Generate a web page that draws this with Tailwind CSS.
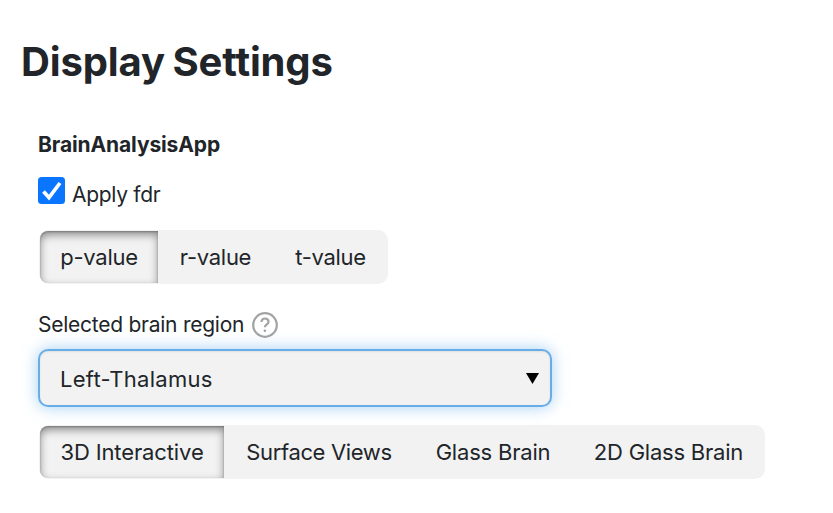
<!DOCTYPE html>
<html lang="en"><head><meta charset="utf-8"><title>Display Settings</title>
<script src="https://cdn.jsdelivr.net/npm/@tailwindcss/browser@4"></script></head>
<body class="bg-white font-['Inter',sans-serif] text-[#212529]">
<main class="flex w-[833px] h-[513px] flex-col overflow-hidden pt-[36px]">
<h1 class="pl-[21px] h-[52px] text-[40px] leading-[52px] font-bold tracking-[-0.14px] [word-spacing:-1.6px] whitespace-nowrap">Display Settings</h1>
<section class="flex flex-col items-start pl-[38px] pt-[43px] whitespace-nowrap">
<h2 class="h-[28px] text-[21px] leading-[28px] font-bold tracking-[-0.12px]">BrainAnalysisApp</h2>
<label class="mt-[18px] flex h-[28px] items-start gap-[7px] text-[21px] leading-[36px] tracking-[-0.3px]">
<svg class="h-[27px] w-[27px]" viewBox="0 0 27 27"><rect width="27" height="27" rx="3.500" fill="#0a76ff"/><path d="M5.500 14.500l5.500 6L22 6" fill="none" stroke="white" stroke-width="3.700"/></svg>Apply fdr</label>
<div class="mt-[25px] ml-px flex h-[54px] rounded-[10px] bg-[#f2f2f2] pt-px pl-px text-[22px] leading-[53px] tracking-[-0.28px]">
<div class="h-[52px] w-[118px] rounded-l-[8px] text-center shadow-[inset_0_4px_9px_rgba(0,0,0,.42),inset_0_1px_2px_rgba(0,0,0,.25)]">p-value</div><div class="w-[115px] text-center">r-value</div><div class="w-[115px] text-center">t-value</div></div>
<div class="mt-[27px] flex h-[28px] items-center gap-2 text-[21px] leading-[28px] tracking-[-0.25px]">Selected brain region<svg class="h-[27px] w-[27px]" viewBox="0 0 27 27" fill="none" stroke="#a3a3a3" stroke-width="2.200"><circle cx="13" cy="13" r="11.800"/><path d="M9.500 10c0-4.800 7-4.500 7 0 0 2.500-3.600 2.500-3.600 5.300"/><circle cx="12.900" cy="18.800" r="1.300" fill="#a3a3a3" stroke="none"/></svg></div>
<div class="mt-[10px] flex h-[58px] w-[514px] items-center justify-between rounded-[10px] border-2 border-[#67aee8] bg-[#f2f2f2] pl-[20px] pr-[11px] text-[22px] tracking-[0.28px] shadow-[inset_0_1px_2px_rgba(0,0,0,.08),0_0_16px_rgba(102,175,233,.6)]"><span class="pt-[2px]">Left-Thalamus</span><svg class="h-[11px] w-[13px]" viewBox="0 0 13 11"><path d="M0 0h13L6.500 11z" fill="black"/></svg></div>
<div class="relative mt-[18px] ml-px flex h-[54px] rounded-[10px] bg-[#f2f2f2] pt-px pl-px text-[22px] leading-[53px] tracking-[-0.12px]">
<div class="h-[52px] w-[184px] rounded-l-[8px] text-center shadow-[inset_0_4px_9px_rgba(0,0,0,.42),inset_0_1px_2px_rgba(0,0,0,.25)]">3D Interactive</div><div class="w-[190px] text-center tracking-[-0.35px]">Surface Views</div><div class="w-[158px] text-center tracking-[-0.2px]">Glass Brain</div><div class="w-[193px] text-center tracking-[-0.22px]">2D Glass Brain</div></div>
</section></main></body></html>
